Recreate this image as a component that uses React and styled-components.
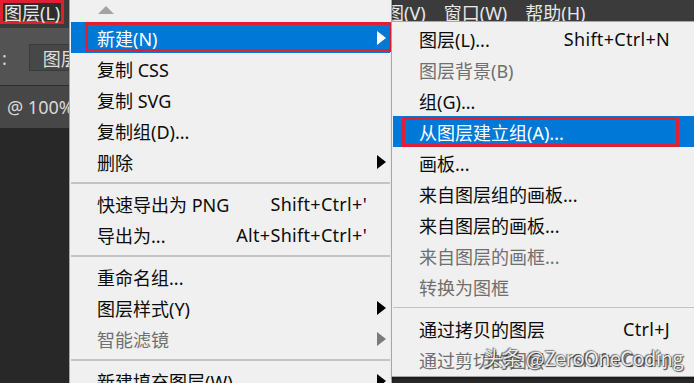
import React from "react";
import styled, { createGlobalStyle, css } from "styled-components";

const GlobalStyle = createGlobalStyle`
  html, body {
    margin: 0;
    padding: 0;
    background: #282828;
  }
  body {
    font-family: "Noto Sans", "Noto Sans CJK SC", sans-serif;
  }
`;

const Stage = styled.div`
  position: relative;
  width: 694px;
  height: 383px;
  overflow: hidden;
  background: #282828;
`;

const Workspace = styled.div`
  display: flex;
  flex-direction: column;
  height: 100%;
`;

const MenuBar = styled.div`
  height: 28px;
  flex: none;
  background: #3b3b3b;
  display: flex;
  align-items: flex-start;
  gap: 10px;
`;

const BarItem = styled.div`
  height: 24px;
  padding: 0 4px;
  display: flex;
  align-items: center;
  font-size: 18px;
  color: #e8e8e8;
  white-space: nowrap;
  box-sizing: border-box;
  ${({ $marked }) =>
    $marked &&
    css`
      background: #2d2d2d;
      box-shadow: inset 0 0 0 3px #e0202e;
    `}
`;

const OptionsBar = styled.div`
  height: 57px;
  flex: none;
  background: #535353;
  display: flex;
  align-items: center;
  padding: 2px 0 0 2px;
  box-sizing: border-box;
  gap: 22px;
`;

const Colon = styled.span`
  font-size: 18px;
  color: #d8d8d8;
`;

const Field = styled.div`
  width: 90px;
  height: 27px;
  box-sizing: border-box;
  background: #474747;
  border: 1px solid #3a3a3a;
  display: flex;
  align-items: center;
  padding-left: 13px;
  font-size: 18px;
  color: #dedede;
`;

const TabBar = styled.div`
  height: 43px;
  flex: none;
  background: #474747;
  border-top: 1px solid #2e2e2e;
  box-sizing: border-box;
  display: flex;
  align-items: center;
  padding-left: 7px;
`;

const Tab = styled.span`
  font-size: 18px;
  color: #d9d9d9;
`;

const Canvas = styled.div`
  flex: 1;
  background: #282828;
`;

const Menu = styled.div`
  position: absolute;
  left: ${({ $left }) => $left}px;
  top: ${({ $top }) => $top}px;
  width: ${({ $width }) => $width}px;
  box-sizing: border-box;
  background: #f0f0f0;
  border: 1px solid #a6a6a6;
  padding: 1px;
  display: flex;
  flex-direction: column;
  box-shadow: 1px 2px 2px rgba(0, 0, 0, 0.35);
`;

const ScrollUp = styled.div`
  height: 21px;
  display: flex;
  align-items: flex-start;
  padding: 5px 0 0 27px;
  box-sizing: border-box;
`;

const UpArrow = styled.span`
  width: 0;
  height: 0;
  border-left: 8px solid transparent;
  border-right: 8px solid transparent;
  border-bottom: 8px solid #a3a3a3;
`;

const Item = styled.div`
  position: relative;
  height: 31px;
  flex: none;
  display: flex;
  align-items: center;
  padding-left: ${({ $indent }) => $indent}px;
  padding-right: ${({ $end }) => $end}px;
  font-size: 18px;
  white-space: nowrap;
  color: ${({ $disabled }) => ($disabled ? "#6f6f6f" : "#0c0c0c")};
  ${({ $active }) =>
    $active &&
    css`
      background: #0078d7;
      color: #ffffff;
    `}
  ${({ $box }) =>
    $box &&
    css`
      &::after {
        content: "";
        position: absolute;
        top: ${$box.top}px;
        bottom: ${$box.bottom}px;
        left: ${$box.left}px;
        right: ${$box.right}px;
        border: 3px solid #e0202e;
        pointer-events: none;
      }
    `}
`;

const Label = styled.span`
  flex: 1;
`;

const Shortcut = styled.span`
  letter-spacing: 0.3px;
`;

const ArrowSlot = styled.span`
  width: 23px;
  flex: none;
  display: flex;
  justify-content: flex-end;
  padding-right: 4px;
  box-sizing: border-box;
`;

const Arrow = styled.span`
  width: 0;
  height: 0;
  border-top: 7px solid transparent;
  border-bottom: 7px solid transparent;
  border-left: 9px solid
    ${({ $active, $disabled }) =>
      $active ? "#ffffff" : $disabled ? "#7a7a7a" : "#000000"};
`;

const Separator = styled.div`
  height: 11px;
  flex: none;
  display: flex;
  align-items: center;
  &::before {
    content: "";
    flex: 1;
    height: ${({ $thin }) => ($thin ? 1 : 2)}px;
    background: #c3c3c3;
  }
`;

const Watermark = styled.div`
  position: absolute;
  left: 483px;
  top: 343px;
  font-family: "Noto Sans CJK SC", sans-serif;
  font-size: 20px;
  letter-spacing: -0.6px;
  color: rgba(255, 255, 255, 0.92);
  white-space: nowrap;
  text-shadow: 0 0 1px rgba(40, 40, 40, 0.9), 1px 1px 1px rgba(40, 40, 40, 0.8),
    -1px -1px 1px rgba(40, 40, 40, 0.5);
`;

const barItems = ["文字(Y)", "选择(S)", "滤镜(T)", "3D(D)", "视图(V)", "窗口(W)", "帮助(H)"];

const mainItems = [
  { label: "新建(N)", sub: true, active: true, box: { top: 0, bottom: 1, left: 14, right: -2 } },
  { label: "复制 CSS" },
  { label: "复制 SVG" },
  { label: "复制组(D)..." },
  { label: "删除", sub: true },
  { sep: true },
  { label: "快速导出为 PNG", key: "Shift+Ctrl+'" },
  { label: "导出为...", key: "Alt+Shift+Ctrl+'" },
  { sep: true },
  { label: "重命名组..." },
  { label: "图层样式(Y)", sub: true },
  { label: "智能滤镜", sub: true, disabled: true },
  { sep: true },
  { label: "新建填充图层(W)", sub: true },
];

const subItems = [
  { label: "图层(L)...", key: "Shift+Ctrl+N" },
  { label: "图层背景(B)", disabled: true },
  { label: "组(G)..." },
  { label: "从图层建立组(A)...", active: true, box: { top: 1, bottom: 0, left: 9, right: 15 } },
  { label: "画板..." },
  { label: "来自图层组的画板..." },
  { label: "来自图层的画板..." },
  { label: "来自图层的画框...", disabled: true },
  { label: "转换为图框", disabled: true },
  { sep: true },
  { label: "通过拷贝的图层", key: "Ctrl+J" },
  { label: "通过剪切的图层", key: "Shift+Ctrl+J", disabled: true },
];

const MainMenu = () => (
  <Menu $left={69} $top={-1} $width={323}>
    <ScrollUp>
      <UpArrow />
    </ScrollUp>
    {mainItems.map((it, i) =>
      it.sep ? (
        <Separator key={i} />
      ) : (
        <Item
          key={i}
          $indent={26}
          $end={0}
          $active={it.active}
          $disabled={it.disabled}
          $box={it.box}
        >
          <Label>{it.label}</Label>
          {it.key && <Shortcut>{it.key}</Shortcut>}
          <ArrowSlot>
            {it.sub && <Arrow $active={it.active} $disabled={it.disabled} />}
          </ArrowSlot>
        </Item>
      )
    )}
  </Menu>
);

const SubMenu = () => (
  <Menu $left={391} $top={21} $width={305}>
    {subItems.map((it, i) =>
      it.sep ? (
        <Separator key={i} $thin />
      ) : (
        <Item
          key={i}
          $indent={26}
          $end={24}
          $active={it.active}
          $disabled={it.disabled}
          $box={it.box}
        >
          <Label>{it.label}</Label>
          {it.key && <Shortcut>{it.key}</Shortcut>}
        </Item>
      )
    )}
  </Menu>
);

export default function App() {
  return (
    <>
      <GlobalStyle />
      <Stage>
        <Workspace>
          <MenuBar>
            <BarItem $marked>图层(L)</BarItem>
            {barItems.map((t) => (
              <BarItem key={t}>{t}</BarItem>
            ))}
          </MenuBar>
          <OptionsBar>
            <Colon>:</Colon>
            <Field>图层</Field>
          </OptionsBar>
          <TabBar>
            <Tab>@ 100%</Tab>
          </TabBar>
          <Canvas />
        </Workspace>
        <MainMenu />
        <SubMenu />
        <Watermark>头条 @ZeroOneCoding</Watermark>
      </Stage>
    </>
  );
}
